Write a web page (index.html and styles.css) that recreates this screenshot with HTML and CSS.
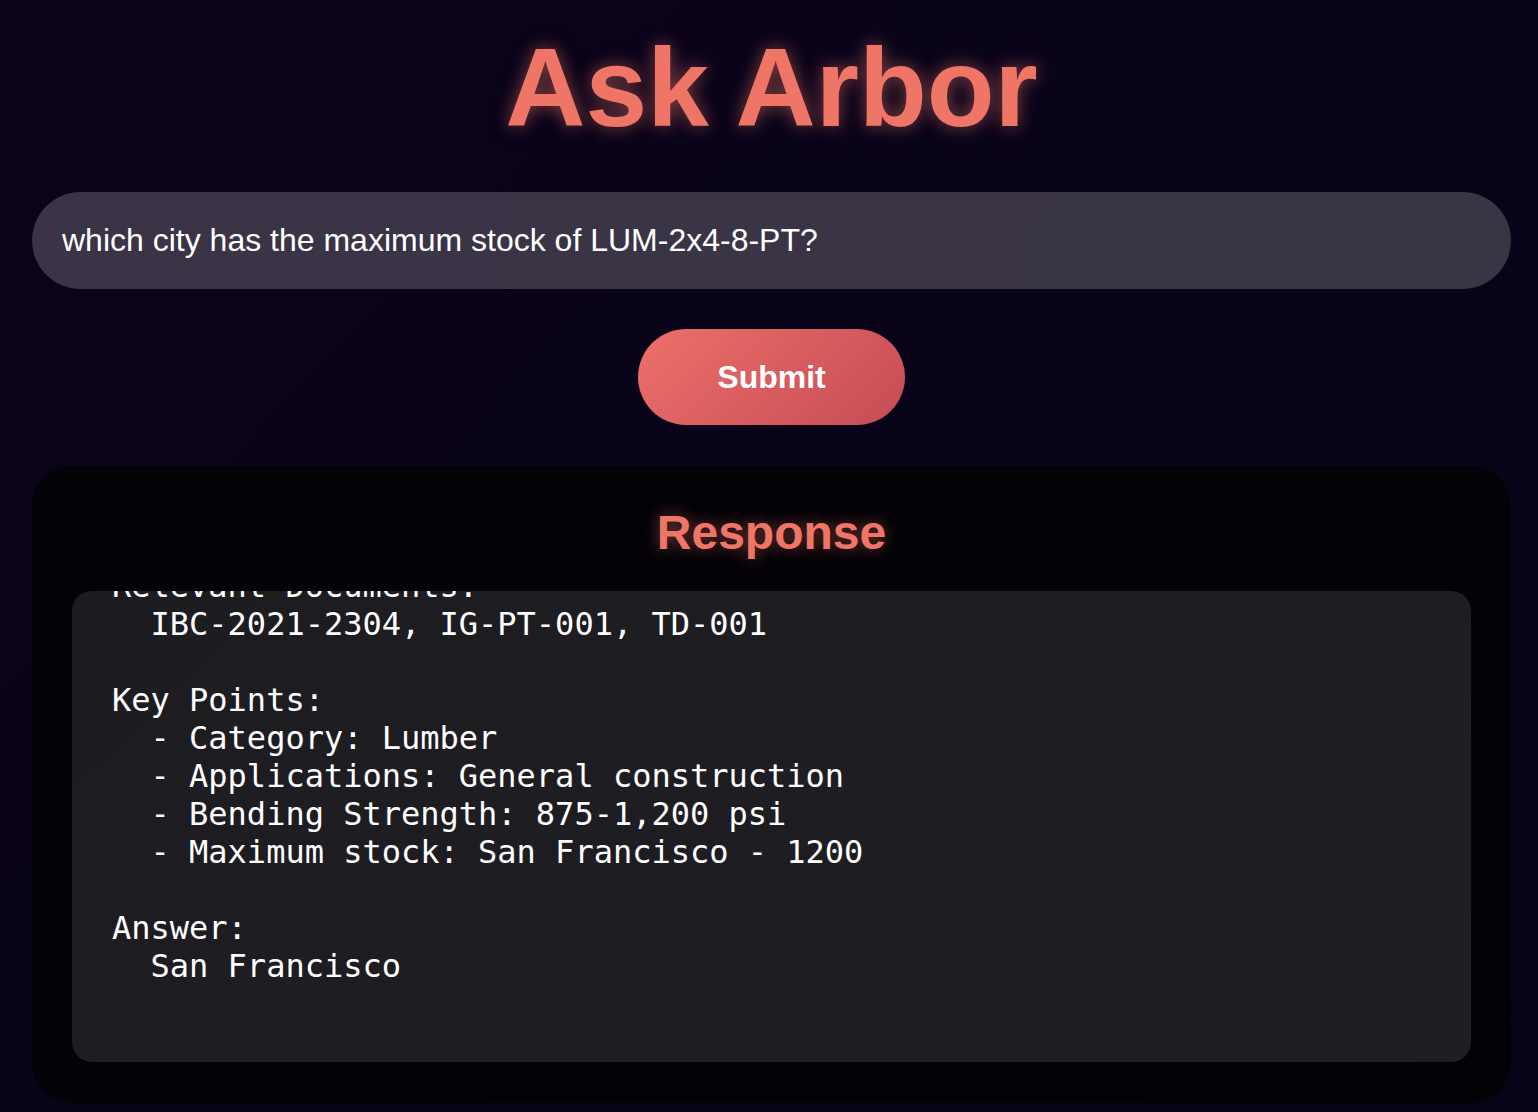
FILE: index.html
```html
<!DOCTYPE html>
<html lang="en">
<head>
<meta charset="utf-8">
<title>Ask Arbor</title>
<link rel="stylesheet" href="styles.css">
</head>
<body>
<main class="app">
  <h1 class="title">Ask Arbor</h1>
  <input class="query" type="text" value="which city has the maximum stock of LUM-2x4-8-PT?">
  <button class="submit" type="button">Submit</button>
  <section class="card">
    <h2 class="card-title">Response</h2>
    <pre class="response" id="response">Relevant Documents:
  IBC-2021-2304, IG-PT-001, TD-001

Key Points:
  - Category: Lumber
  - Applications: General construction
  - Bending Strength: 875-1,200 psi
  - Maximum stock: San Francisco - 1200

Answer:
  San Francisco</pre>
  </section>
</main>
<script src="script.js"></script>
</body>
</html>
```
FILE: styles.css
```css
* { box-sizing: border-box; }
html, body { margin: 0; padding: 0; }
body {
  min-height: 1112px;
  background: linear-gradient(135deg, #0b0319 0%, #07041a 100%);
  font-family: "Liberation Sans", Arial, sans-serif;
  color: #fff;
  overflow: hidden;
}
.app {
  width: 1479px;
  margin-left: 32px;
  display: flex;
  flex-direction: column;
  align-items: center;
}
.title {
  margin: 32px 0 48px;
  font-size: 111px;
  line-height: 112px;
  height: 112px;
  font-weight: 700;
  color: #ef7666;
  text-shadow: 0 0 18px rgba(239, 118, 102, 0.55);
}
.query {
  width: 100%;
  height: 97px;
  border: none;
  outline: none;
  border-radius: 49px;
  background: linear-gradient(135deg, #3a3446 0%, #3a3545 100%);
  color: #fff;
  font-family: "Liberation Sans", Arial, sans-serif;
  font-size: 32px;
  padding: 0 30px;
}
.submit {
  margin-top: 40px;
  width: 267px;
  height: 96px;
  border: none;
  border-radius: 48px;
  background: linear-gradient(135deg, #ec706a 0%, #c64b55 100%);
  color: #fff;
  font-family: "Liberation Sans", Arial, sans-serif;
  font-size: 32px;
  font-weight: 700;
}
.card {
  margin-top: 41px;
  width: 100%;
  height: 637px;
  border-radius: 40px;
  background: #030207;
  padding: 38px 40px 41px;
  display: flex;
  flex-direction: column;
}
.card-title {
  margin: 0 0 29px;
  height: 58px;
  line-height: 58px;
  text-align: center;
  font-size: 48px;
  font-weight: 700;
  color: #ef7666;
  text-shadow: 0 0 16px rgba(239, 118, 102, 0.5);
}
.response {
  margin: 0;
  height: 471px;
  border-radius: 20px;
  background: linear-gradient(135deg, #1d1c21 0%, #1f1e23 100%);
  padding: 40px 40px 77px;
  font-family: "DejaVu Sans Mono", monospace;
  font-size: 32px;
  line-height: 38px;
  color: #fff;
  overflow: auto;
  scrollbar-width: none;
}
.response::-webkit-scrollbar { display: none; }
```
FILE: script.js
```js
document.getElementById('response').scrollTop = 64;
```
